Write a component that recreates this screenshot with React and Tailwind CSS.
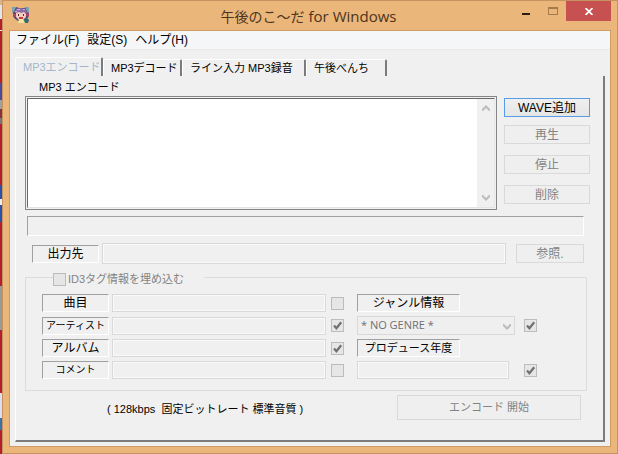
import React, { useState } from 'react';
import clsx from 'clsx';

const menus = ['ファイル(F)', '設定(S)', 'ヘルプ(H)'];

const tabs = [
  { id: 'encode', label: 'MP3エンコード', width: 'w-[88px]' },
  { id: 'decode', label: 'MP3デコード', width: 'w-[79px]' },
  { id: 'line', label: 'ライン入力 MP3録音', width: 'w-[124px]' },
  { id: 'bench', label: '午後べんち', width: 'w-[81px]' },
];

const AppIcon = () => (
  <svg width="18" height="18" viewBox="0 0 18 18" aria-hidden="true">
    <path d="M1 2l3-1 3 1h5l3-1 2 2v7l-2 3-4 2H6l-4-3-1-4z" fill="#5a4c72" />
    <path d="M0 1h4L2 6 0 7zM17 1h-4l2 5 2 1z" fill="#7fa3ad" />
    <path d="M4 3l4-1 5 1 2 4H3z" fill="#8f6cab" />
    <path d="M5 3h3v1H5zM11 3h2v1h-2zM3 5h2v1H3z" fill="#cbb0de" />
    <path d="M4 7l3-1 2 1 3-1 2 2v3l-3 3H7l-3-3z" fill="#f3cdbd" />
    <path d="M6 8h1v2H6zM11 8h1v2h-1z" fill="#5b2741" />
    <path d="M7 11h4v2H7z" fill="#c93a46" />
    <path d="M1 8h3v3H1zM14 7h3v3h-3z" fill="#a8456f" />
    <path d="M7 13l4 0 2 4H6z" fill="#f4e3a0" />
    <path d="M12 14l3-2 2 2-1 3h-3z" fill="#2f6f74" />
  </svg>
);

const Chevron = ({ up, className }) => (
  <svg width="8" height="7" viewBox="0 0 8 7" className={className} aria-hidden="true">
    <path
      d={up ? 'M0 4l4-4 4 4v2H7L4 3 1 6H0z' : 'M0 3l4 4 4-4V1H7L4 4 1 1H0z'}
      fill="#bcbcbc"
    />
  </svg>
);

const CheckBox = ({ label, id, checked = false }) => (
  <span className="relative block size-[13px]">
    <input
      id={id}
      type="checkbox"
      aria-label={label}
      defaultChecked={checked}
      disabled
      className="block size-[13px] appearance-none border border-[#bcbcbc] bg-[#e6e6e6]"
    />
    {checked && (
      <svg className="pointer-events-none absolute inset-0" width="13" height="13" viewBox="0 0 13 13" aria-hidden="true">
        <path d="M3 6.5l2.4 2.7L10.2 3.2" fill="none" stroke="#707070" strokeWidth="2.2" />
      </svg>
    )}
  </span>
);

const SunkenLabel = ({ htmlFor, className, children }) => (
  <label
    htmlFor={htmlFor}
    className={clsx(
      'flex h-[18px] items-center justify-center whitespace-nowrap border border-t-[#a0a0a0] border-r-white border-b-white border-l-[#a0a0a0]',
      className
    )}
  >
    {children}
  </label>
);

const Field = ({ id, className }) => (
  <input
    id={id}
    type="text"
    disabled
    className={clsx('min-w-0 border border-[#d9d9d9] bg-[#f0f0f0] px-1 shadow-[inset_0_0_0_1px_#fafafa]', className)}
  />
);

const PushButton = ({ primary, className, children }) => (
  <button
    type="button"
    disabled={!primary}
    className={clsx(
      'flex items-center justify-center border',
      primary
        ? 'border-[#569de5] bg-linear-to-b from-[#f0f0f0] to-[#e5e5e5] text-black'
        : 'border-[#d9d9d9] bg-[#efefef] text-[#838383]',
      className
    )}
  >
    {children}
  </button>
);

const TitleBar = () => (
  <header className="flex h-[29px] items-start justify-between">
    <div className="flex h-7 w-24 items-center pl-[3px]">
      <AppIcon />
    </div>
    <h1 className="whitespace-nowrap leading-[30px] text-[#4a3420]">
      <span className="mr-1 text-[14px]">午後のこ～だ</span>
      <span className="font-['Open_Sans',sans-serif] text-[15px]">for Windows</span>
    </h1>
    <div className="flex h-5">
      <button type="button" aria-label="最小化" className="flex w-[28px] items-center justify-center pt-[6px]">
        <span className="h-[2px] w-2 bg-[#2b1d10]" />
      </button>
      <button type="button" aria-label="最大化" disabled className="flex w-[26px] items-center justify-center">
        <span className="h-2 w-[10px] border border-t-2 border-[#a47b4c]" />
      </button>
      <button type="button" aria-label="閉じる" className="flex w-[45px] items-center justify-center bg-[#c75050]">
        <svg width="8" height="7" viewBox="0 0 8 7" aria-hidden="true">
          <path d="M0.5 0l7 7M7.5 0l-7 7" stroke="#fff" strokeWidth="1.7" />
        </svg>
      </button>
    </div>
  </header>
);

const MenuBar = () => (
  <nav className="flex h-[19px] items-center gap-2 border-b border-[#e9e9e9] bg-[#f5f6f7] pl-[6px]">
    {menus.map(menu => (
      <button key={menu} type="button">{menu}</button>
    ))}
  </nav>
);

const TabStrip = ({ active, onSelect }) => (
  <div role="tablist" className="flex h-[19px] items-end">
    {tabs.map(tab => (
      <button
        key={tab.id}
        type="button"
        role="tab"
        aria-selected={active === tab.id}
        onClick={() => onSelect(tab.id)}
        className={clsx(
          'flex items-center rounded-t-xs border-t border-r-2 border-l border-t-white border-r-[#7c7c7c] border-l-white pl-[7px] text-[11px] whitespace-nowrap',
          tab.width,
          active === tab.id ? 'h-[19px] text-[#a5b5cb]' : 'h-[17px]'
        )}
      >
        {tab.label}
      </button>
    ))}
  </div>
);

const EncodePanel = () => (
  <>
    <div className="flex gap-[7px] pr-[13px] pl-[9px]">
      <div className="flex min-w-0 flex-1 flex-col">
        <h2 className="h-5 pl-[14px] text-[11px] leading-[22px]">MP3 エンコード</h2>
        <div className="h-[114px] border border-[#868686] p-px">
          <div className="flex h-full border border-t-[#696969] border-r-[#e8e8e8] border-b-[#e3e3e3] border-l-[#696969] bg-white">
            <select multiple aria-label="MP3 エンコード" className="min-w-0 flex-1 appearance-none bg-white" />
            <div className="flex w-[17px] flex-col items-center justify-between bg-[#f0f0f0] py-[6px]">
              <Chevron up />
              <Chevron />
            </div>
          </div>
        </div>
      </div>
      <div className="w-[86px] pt-[22px]">
        <PushButton primary className="h-[19px] w-full">WAVE追加</PushButton>
        <div className="mt-2 flex flex-col gap-[11px]">
          <PushButton className="h-[19px]">再生</PushButton>
          <PushButton className="h-[19px]">停止</PushButton>
          <PushButton className="h-[19px]">削除</PushButton>
        </div>
      </div>
    </div>

    <div className="mt-[6px] mr-[19px] ml-[11px] h-5 border border-t-[#a0a0a0] border-r-white border-b-white border-l-[#a0a0a0]" />

    <div className="mt-[7px] mr-[19px] ml-4 flex items-center">
      <SunkenLabel htmlFor="output" className="w-[67px]">出力先</SunkenLabel>
      <Field id="output" className="ml-[3px] h-[21px] flex-1" />
      <PushButton className="ml-[10px] h-[19px] w-[68px]">参照.</PushButton>
    </div>

    <fieldset className="mt-[3px] mr-4 ml-[9px] border border-[#dcdcdc] pr-[49px] pb-[11px] pl-4">
      <legend className="ml-[11px] flex h-5 items-center gap-[2px] pt-1 pr-5 text-[11px] text-[#838383]">
        <CheckBox id="id3" />
        <label htmlFor="id3">ID3タグ情報を埋め込む</label>
      </legend>
      <div className="mt-[7px] grid grid-cols-[67px_minmax(0,1fr)_13px_171px_22px] items-center gap-y-1">
        <SunkenLabel htmlFor="title">曲目</SunkenLabel>
        <Field id="title" className="mr-[5px] ml-[3px] h-[18px]" />
        <CheckBox label="曲目" />
        <div className="col-span-2 pl-[13px]">
          <SunkenLabel htmlFor="genre" className="w-[103px]">ジャンル情報</SunkenLabel>
        </div>

        <SunkenLabel htmlFor="artist" className="text-[10px]">アーティスト</SunkenLabel>
        <Field id="artist" className="mr-[5px] ml-[3px] h-[18px]" />
        <CheckBox label="アーティスト" checked />
        <div className="relative pl-[13px]">
          <select
            id="genre"
            disabled
            className="block h-[19px] w-full appearance-none border border-[#d9d9d9] bg-[#efefef] px-[3px] font-['Open_Sans',sans-serif] text-[11px] text-[#707070] opacity-100"
          >
            <option>* NO GENRE *</option>
          </select>
          <Chevron className="pointer-events-none absolute top-[7px] right-1" />
        </div>
        <div className="pl-[9px]">
          <CheckBox label="ジャンル情報" checked />
        </div>

        <SunkenLabel htmlFor="album">アルバム</SunkenLabel>
        <Field id="album" className="mr-[5px] ml-[3px] h-[18px]" />
        <CheckBox label="アルバム" checked />
        <div className="col-span-2 pl-[13px]">
          <SunkenLabel htmlFor="year" className="w-[103px] text-[11px]">プロデュース年度</SunkenLabel>
        </div>

        <SunkenLabel htmlFor="comment" className="text-[10px]">コメント</SunkenLabel>
        <Field id="comment" className="mr-[5px] ml-[3px] h-[18px]" />
        <CheckBox label="コメント" />
        <div className="flex pr-[6px] pl-[13px]">
          <Field id="year" className="h-[18px] flex-1" />
        </div>
        <div className="pl-[9px]">
          <CheckBox label="プロデュース年度" checked />
        </div>
      </div>
    </fieldset>

    <div className="mt-1 mr-[22px] ml-[91px] flex items-center justify-between">
      <p className="whitespace-pre pt-1 text-[11px]">( 128kbps  固定ビットレート 標準音質 )</p>
      <PushButton className="h-[25px] w-[184px] text-[11px]">エンコード 開始</PushButton>
    </div>
  </>
);

const App = () => {
  const [active, setActive] = useState('encode');

  return (
    <div className="flex min-h-screen bg-[#b3202c] font-['Liberation_Sans','Noto_Sans_CJK_JP',sans-serif] text-xs text-black">
      {/* desktop showing at the window's left edge */}
      <div className="w-[2px] bg-[linear-gradient(#d8b48c_0_5px,#e4e4ea_5px_19px,#b3202c_19px_30px,#eee_30px_31px,#b3202c_31px_83px,#4a4a9c_83px_100px,#a0a0a0_100px_109px,#8a3038_109px_118px,#777_118px_124px,#b3202c_124px_185px,#2a50a8_185px_199px,#eee_199px_205px,#2a50a8_205px_222px,#b3202c_222px_286px,#999_286px_330px,#b3202c_330px_393px,#dde_393px_418px,#3a70a8_418px_430px,#b3202c_430px)]" />
      <div className="flex min-w-0 flex-1 flex-col border border-[#c4935f] bg-[#ebb67a] px-[6px] pb-[6px]">
        <TitleBar />
        <main className="flex flex-1 flex-col border border-[#cd9b63] bg-[#f0f0f0]">
          <MenuBar />
          <div className="flex flex-1 flex-col px-[5px] pt-[7px] pb-1">
            <TabStrip active={active} onSelect={setActive} />
            <div className="flex-1 border-r-2 border-b-2 border-l border-r-[#7c7c7c] border-b-[#7c7c7c] border-l-white">
              <EncodePanel />
            </div>
          </div>
        </main>
      </div>
    </div>
  );
};

export default App;
